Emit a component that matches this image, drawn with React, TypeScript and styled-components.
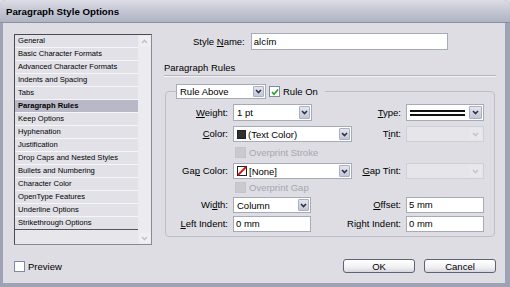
import React from 'react';
import styled, { createGlobalStyle, css } from 'styled-components';

const GlobalStyle = createGlobalStyle`
  html, body {
    margin: 0;
    padding: 0;
    background: #dddde3;
  }
  body {
    font-family: "Liberation Sans", Arial, sans-serif;
    color: #000;
  }
`;

const BODY_BG = '#dddde3';

const Window = styled.div`
  width: 510px;
  height: 287px;
  box-sizing: border-box;
  display: flex;
  flex-direction: column;
  background: #9fa2b4;
  border-radius: 6px 6px 0 0;
  overflow: hidden;
`;

const TitleBar = styled.div`
  height: 22px;
  flex: none;
  display: flex;
  align-items: center;
  padding-left: 6px;
  background: linear-gradient(#dcdde6 0%, #c8cad6 40%, #b0b3c4 100%);
  border-bottom: 1px solid #8b8fa3;
`;

const Title = styled.div`
  font-size: 9.7px;
  font-weight: bold;
`;

const Body = styled.div`
  flex: 1;
  display: flex;
  gap: 12px;
  margin: 0 5px 4px 3px;
  padding: 11px 9px 0 11px;
  background: ${BODY_BG};
`;

const LeftCol = styled.div`
  width: 138px;
  display: flex;
  flex-direction: column;
`;

const CategoryList = styled.div`
  height: 211px;
  box-sizing: border-box;
  display: flex;
  border: 1px solid #4a4a55;
  border-right-color: #8a8a96;
  border-bottom-color: #8a8a96;
  background: #e6e6eb;
`;

const ItemsCol = styled.div`
  flex: 1;
  display: flex;
  flex-direction: column;
`;

const Item = styled.div<{ $selected?: boolean }>`
  height: 12px;
  line-height: 12px;
  padding-left: 3px;
  font-size: 7.6px;
  white-space: nowrap;
  background: #e1e1e7;
  border-bottom: 1px solid #f6f6f9;
  ${(p) => p.$selected && css`
    background: #b8b8c6;
    font-weight: bold;
  `}
  &:last-child {
    border-bottom: 1px solid #55555f;
  }
`;

const ScrollCol = styled.div`
  width: 13px;
  display: flex;
  flex-direction: column;
  justify-content: space-between;
  align-items: center;
  padding: 1px 0;
  background: #ececf0;
`;

const ScrollArrow = styled.div`
  width: 10px;
  height: 10px;
  display: flex;
  align-items: center;
  justify-content: center;
  background: #f0f0f3;
`;

const PreviewRow = styled.div`
  margin-top: 16px;
  display: flex;
  align-items: center;
  gap: 3px;
  font-size: 9.5px;
`;

const Box = styled.div<{ $disabled?: boolean }>`
  width: 9px;
  height: 9px;
  flex: none;
  display: flex;
  align-items: center;
  justify-content: center;
  border: 1px solid #7c8aa6;
  background: #fff;
  ${(p) => p.$disabled && css`
    border-color: #c4c4cc;
    background: #c9c9ce;
  `}
`;

const RightCol = styled.div`
  flex: 1;
  display: flex;
  flex-direction: column;
  margin-top: -1px;
`;

const NameRow = styled.div`
  display: flex;
  align-items: center;
  gap: 6px;
  padding-left: 29px;
`;

const Label = styled.div<{ $muted?: boolean }>`
  font-size: 9.5px;
  text-align: right;
  white-space: nowrap;
  color: ${(p) => (p.$muted ? '#a4a4ae' : '#000')};
  u { text-decoration-thickness: 1px; text-underline-offset: 1px; }
`;

const TextField = styled.div<{ $w?: number; $h?: number }>`
  width: ${(p) => (p.$w ? `${p.$w}px` : '100%')};
  height: ${(p) => p.$h || 16}px;
  box-sizing: border-box;
  border: 1px solid #a6abba;
  background: #fff;
  font-size: 9.5px;
  line-height: ${(p) => (p.$h || 16) - 2}px;
  padding-left: 2px;
  white-space: nowrap;
`;

const SectionHeading = styled.div`
  margin-top: 11px;
  height: 14px;
  line-height: 13px;
  font-size: 9.5px;
  border-bottom: 1px solid #b5b5bf;
  box-shadow: 0 1px 0 #f4f4f7;
`;

const RuleGroup = styled.fieldset`
  margin: 8px 1px 0 1px;
  padding: 5px 0 4px 0;
  border: 1px solid #bdbdc7;
  border-radius: 4px;
  min-width: 0;
`;

const RuleLegend = styled.legend`
  margin-left: 10px;
  padding: 0 7px 0 0;
  display: flex;
  align-items: center;
  gap: 3px;
`;

const FieldGrid = styled.div`
  display: grid;
  grid-template-columns: 62px 119px 44px 78px;
  grid-template-rows: 22px 21px 16px 19px 15px 19px 16px;
  column-gap: 5px;
  align-items: start;
`;

const GridLabel = styled(Label)<{ $h?: number }>`
  justify-self: end;
  line-height: ${(p) => p.$h || 16}px;
`;

const CheckRow = styled.div<{ $muted?: boolean }>`
  grid-column: 2 / span 3;
  display: flex;
  align-items: center;
  gap: 3px;
  padding-left: 2px;
  height: 10px;
  font-size: 9.5px;
  color: ${(p) => (p.$muted ? '#a6a6b0' : '#000')};
`;

const SelectBox = styled.div<{ $w: number; $h: number; $disabled?: boolean }>`
  width: ${(p) => p.$w}px;
  height: ${(p) => p.$h}px;
  box-sizing: border-box;
  display: flex;
  align-items: stretch;
  border: 1px solid #a6abba;
  background: #fff;
  ${(p) => p.$disabled && css`
    border-color: #cfcfd6;
    background: #e6e6ea;
  `}
`;

const SelectValue = styled.div`
  flex: 1;
  display: flex;
  align-items: center;
  gap: 2px;
  padding-left: 3px;
  font-size: 9.5px;
  white-space: nowrap;
  overflow: hidden;
`;

const ArrowBtn = styled.div<{ $disabled?: boolean; $w?: number }>`
  width: ${(p) => p.$w || 9}px;
  margin: 1px;
  display: flex;
  align-items: center;
  justify-content: center;
  border: 1px solid #aab0c2;
  border-radius: 1px;
  background: linear-gradient(#e4e6ee, #c3c7d6);
  ${(p) => p.$disabled && css`
    border-color: transparent;
    background: #e8e8ec;
  `}
`;

const Swatch = styled.div`
  width: 9px;
  height: 9px;
  flex: none;
  box-sizing: border-box;
  border: 1px solid #222;
  background: #303030;
`;

const DoubleLine = styled.div`
  flex: 1;
  margin-right: 3px;
  height: 6px;
  box-sizing: border-box;
  border-top: 2px solid #111;
  border-bottom: 2px solid #111;
`;

const ButtonRow = styled.div`
  margin-top: 22px;
  display: flex;
  justify-content: flex-end;
  gap: 9px;
`;

const Button = styled.div`
  width: 72px;
  height: 14px;
  box-sizing: border-box;
  display: flex;
  align-items: center;
  justify-content: center;
  font-size: 9.5px;
  border: 1px solid #5d6275;
  border-radius: 3px;
  background: linear-gradient(#ffffff 0%, #f1f1f4 60%, #d6d6de 100%);
`;

const Chevron = ({ color = '#2c3040', up = false }: { color?: string; up?: boolean }) => (
  <svg width="7" height="5" viewBox="0 0 7 5">
    <path
      d={up ? 'M1 4 L3.5 1.5 L6 4' : 'M1 1 L3.5 3.5 L6 1'}
      fill="none"
      stroke={color}
      strokeWidth="1.6"
    />
  </svg>
);

const CheckMark = () => (
  <svg width="8" height="8" viewBox="0 0 8 8">
    <path d="M1 4 L3 6.2 L7 1.5" fill="none" stroke="#21a621" strokeWidth="1.7" />
  </svg>
);

const NoneSwatch = () => (
  <svg width="10" height="10" viewBox="0 0 10 10" style={{ flex: 'none' }}>
    <rect x="0.5" y="0.5" width="9" height="9" fill="#fff" stroke="#222" />
    <path d="M1 9 L9 1" stroke="#e01010" strokeWidth="1.8" />
  </svg>
);

const Select = ({
  w, h = 16, disabled, arrowW, children,
}: {
  w: number, h?: number, disabled?: boolean, arrowW?: number, children?: React.ReactNode
}) => (
  <SelectBox $w={w} $h={h} $disabled={disabled}>
    <SelectValue>{children}</SelectValue>
    <ArrowBtn $disabled={disabled} $w={arrowW}>
      <Chevron color={disabled ? '#c4c4cc' : '#2c3040'} />
    </ArrowBtn>
  </SelectBox>
);

const categories = [
  'General',
  'Basic Character Formats',
  'Advanced Character Formats',
  'Indents and Spacing',
  'Tabs',
  'Paragraph Rules',
  'Keep Options',
  'Hyphenation',
  'Justification',
  'Drop Caps and Nested Styles',
  'Bullets and Numbering',
  'Character Color',
  'OpenType Features',
  'Underline Options',
  'Strikethrough Options',
];

const App = function () {
  return (
    <>
      <GlobalStyle />
      <Window>
        <TitleBar>
          <Title>Paragraph Style Options</Title>
        </TitleBar>
        <Body>
          <LeftCol>
            <CategoryList>
              <ItemsCol>
                {categories.map((c) => (
                  <Item key={c} $selected={c === 'Paragraph Rules'}>{c}</Item>
                ))}
              </ItemsCol>
              <ScrollCol>
                <ScrollArrow><Chevron up color="#c2c2cc" /></ScrollArrow>
                <ScrollArrow><Chevron color="#c2c2cc" /></ScrollArrow>
              </ScrollCol>
            </CategoryList>
            <PreviewRow>
              <Box />
              Preview
            </PreviewRow>
          </LeftCol>

          <RightCol>
            <NameRow>
              <Label>Style <u>N</u>ame:</Label>
              <TextField $w={197} $h={17}>alcím</TextField>
            </NameRow>

            <SectionHeading>Paragraph Rules</SectionHeading>

            <RuleGroup>
              <RuleLegend>
                <Select w={90} h={15} arrowW={9}>Rule Above</Select>
                <Box><CheckMark /></Box>
                <Label>Rule On</Label>
              </RuleLegend>
              <FieldGrid>
                <GridLabel $h={17}><u>W</u>eight:</GridLabel>
                <Select w={79} h={17}>1 pt</Select>
                <GridLabel $h={17}><u>T</u>ype:</GridLabel>
                <Select w={78} h={17} arrowW={11}><DoubleLine /></Select>

                <GridLabel><u>C</u>olor:</GridLabel>
                <Select w={119}><Swatch />(Text Color)</Select>
                <GridLabel>T<u>i</u>nt:</GridLabel>
                <Select w={78} disabled arrowW={11} />

                <CheckRow $muted>
                  <Box $disabled />
                  Overprint Stroke
                </CheckRow>

                <GridLabel>Ga<u>p</u> Color:</GridLabel>
                <Select w={119}><NoneSwatch />[None]</Select>
                <GridLabel><u>G</u>ap Tint:</GridLabel>
                <Select w={78} disabled arrowW={11} />

                <CheckRow $muted>
                  <Box $disabled />
                  Overprint Gap
                </CheckRow>

                <GridLabel>Wi<u>d</u>th:</GridLabel>
                <Select w={78}>Column</Select>
                <GridLabel><u>O</u>ffset:</GridLabel>
                <TextField $w={78}>5 mm</TextField>

                <GridLabel><u>L</u>eft Indent:</GridLabel>
                <TextField $w={78}>0 mm</TextField>
                <GridLabel>Ri<u>g</u>ht Indent:</GridLabel>
                <TextField $w={78}>0 mm</TextField>
              </FieldGrid>
            </RuleGroup>

            <ButtonRow>
              <Button>OK</Button>
              <Button>Cancel</Button>
            </ButtonRow>
          </RightCol>
        </Body>
      </Window>
    </>
  );
};

export default App;
